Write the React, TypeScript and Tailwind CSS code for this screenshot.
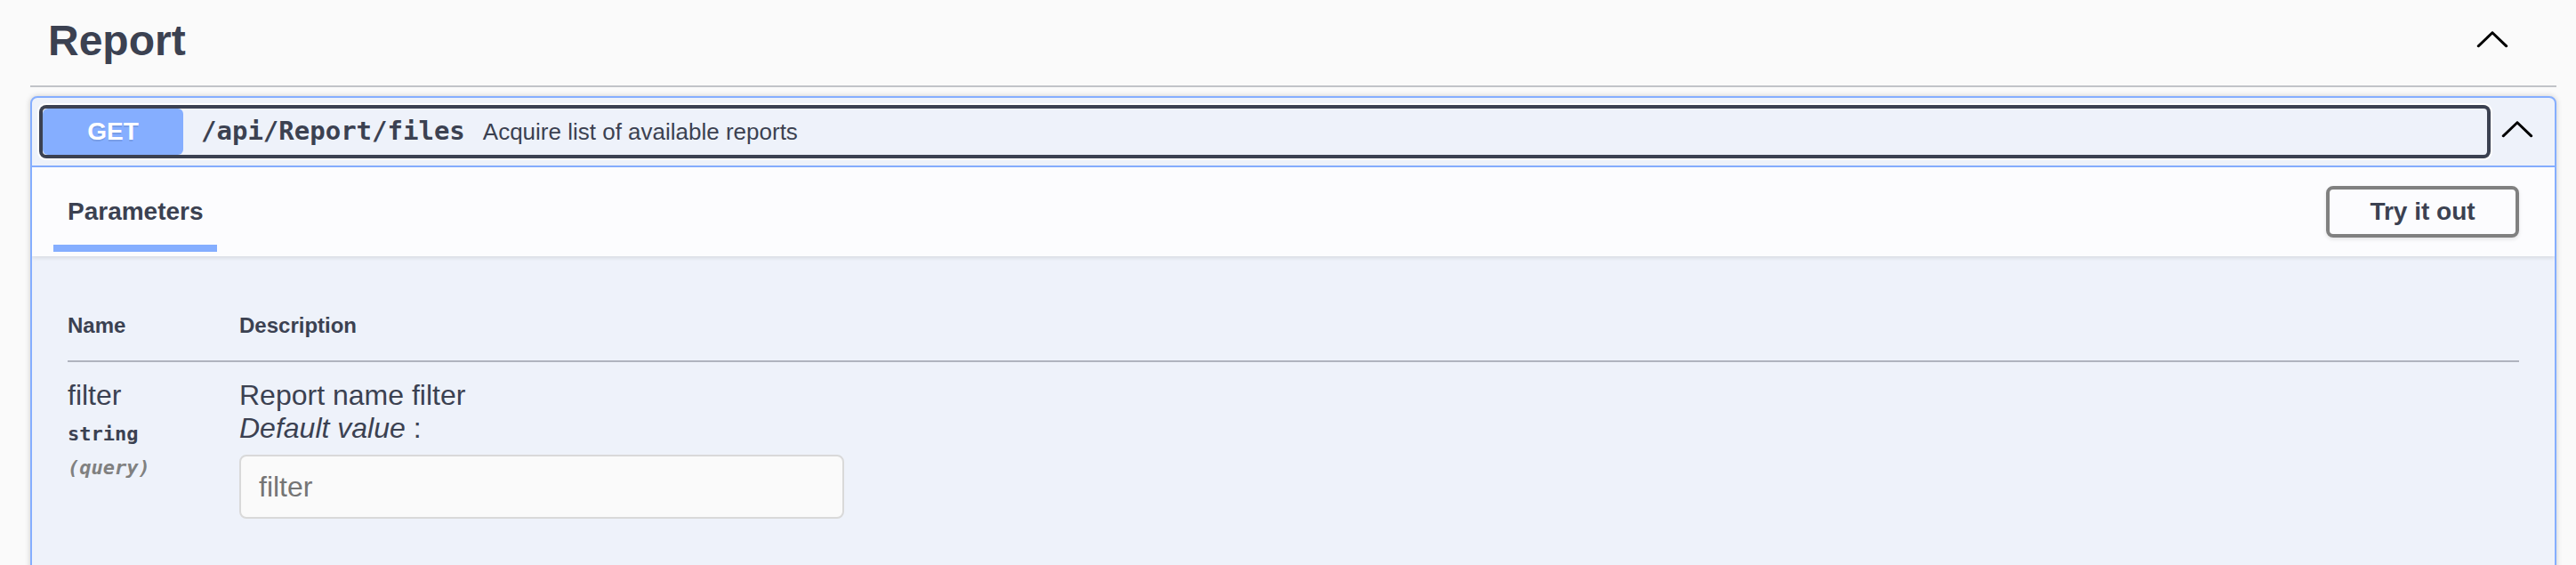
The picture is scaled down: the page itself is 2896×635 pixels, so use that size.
import React from "react";

const Arrow = ({ className = "" }: { className?: string }) => (
  <svg viewBox="0 0 20 20" width={40} height={40} className={"shrink-0 fill-black " + className}>
    <path d="M17.418 14.908c-.282.29-.75.31-1.046.04l-7.388-7.014-7.387 7.014c-.296.27-.764.25-1.046-.04-.28-.29-.28-.75.04-1.046l7.91-7.5c.28-.27.72-.27 1 0l7.91 7.5c.28.27.29.74.01 1.046z" />
  </svg>
);

export default function App() {
  return (
    <div className="min-h-screen bg-[#fafafa] pl-[34px] pr-[22px] text-[#3b4151] font-['Liberation_Sans',Arial,sans-serif]">
      {/* Tag header */}
      <div className="flex items-start justify-between pt-[18px] pb-[22px] pl-[20px] pr-[50px] border-b-2 border-[#c1c3c8]">
        <h3 className="text-[48px] leading-[56px] font-bold">Report</h3>
        <Arrow className="mt-[5px]" />
      </div>

      {/* Operation block */}
      <div className="mt-[10px] rounded-[8px] border-2 border-[#85aeff] bg-[#eef2fa] shadow-[0_0_6px_rgba(0,0,0,0.19)] overflow-hidden">
        {/* Summary */}
        <div className="flex items-center pl-[12px] pr-[20px] pt-[12px] pb-[12px] border-b-2 border-[#85aeff]">
          <div className="flex-1 flex items-center h-[52px] rounded-[4px] shadow-[0_0_0_4px_#3b4151,0_0_0_6px_#ffffff]">
            <span className="w-[158px] h-[52px] flex items-center justify-center rounded-[6px] bg-[#85aeff] text-white text-[28px] font-bold [text-shadow:0_2px_0_rgba(0,0,0,0.1)]">
              GET
            </span>
            <span className="px-[20px] font-['DejaVu_Sans_Mono',monospace] font-bold text-[29px] text-[#3b4151]">
              /api/Report/files
            </span>
            <span className="text-[26px] text-[#3b4151]">Acquire list of available reports</span>
          </div>
          <Arrow className="ml-[16px] mb-[8px]" />
        </div>

        {/* Section header */}
        <div className="flex justify-between h-[100px] px-[40px] bg-[#fcfcfe] shadow-[0_2px_4px_rgba(0,0,0,0.1)]">
          <div className="flex flex-col justify-end pb-[5px]">
            <h4 className="text-[28px] leading-[32px] font-bold">Parameters</h4>
            <div className="mt-[21px] h-[8px] w-[184px] -ml-[16px] bg-[#85aeff]" />
          </div>
          <button className="self-center h-[58px] w-[217px] rounded-[8px] border-[4px] border-[#808080] text-[28px] font-bold text-[#3b4151] shadow-[0_2px_4px_rgba(0,0,0,0.1)]">
            Try it out
          </button>
        </div>

        {/* Parameters table */}
        <div className="px-[40px] pt-[40px] pb-[60px]">
          <div className="grid grid-cols-[193px_1fr] border-b-2 border-[#b0b4be] pt-[24px] pb-[25px] text-[24px] leading-[28px] font-bold">
            <div>Name</div>
            <div>Description</div>
          </div>
          <div className="grid grid-cols-[193px_1fr] pt-[19px] pb-[20px]">
            <div className="flex flex-col">
              <div className="text-[32px] leading-[37px]">filter</div>
              <div className="mt-[12px] font-['DejaVu_Sans_Mono',monospace] font-bold text-[22px] leading-[26px]">string</div>
              <div className="mt-[12px] font-['DejaVu_Sans_Mono',monospace] font-bold italic text-[22px] leading-[26px] text-[#808080]">(query)</div>
            </div>
            <div className="flex flex-col">
              <div className="text-[32px] leading-[37px]">Report name filter</div>
              <div className="text-[32px] leading-[37px]">
                <i>Default value</i> :
              </div>
              <input
                type="text"
                placeholder="filter"
                className="mt-[11px] w-[680px] h-[72px] rounded-[8px] border-2 border-[#d9d9d9] bg-[#fafafa] px-[20px] text-[32px] placeholder:text-[#757575] font-['Liberation_Sans',Arial,sans-serif]"
              />
            </div>
          </div>
        </div>
      </div>
    </div>
  );
}
